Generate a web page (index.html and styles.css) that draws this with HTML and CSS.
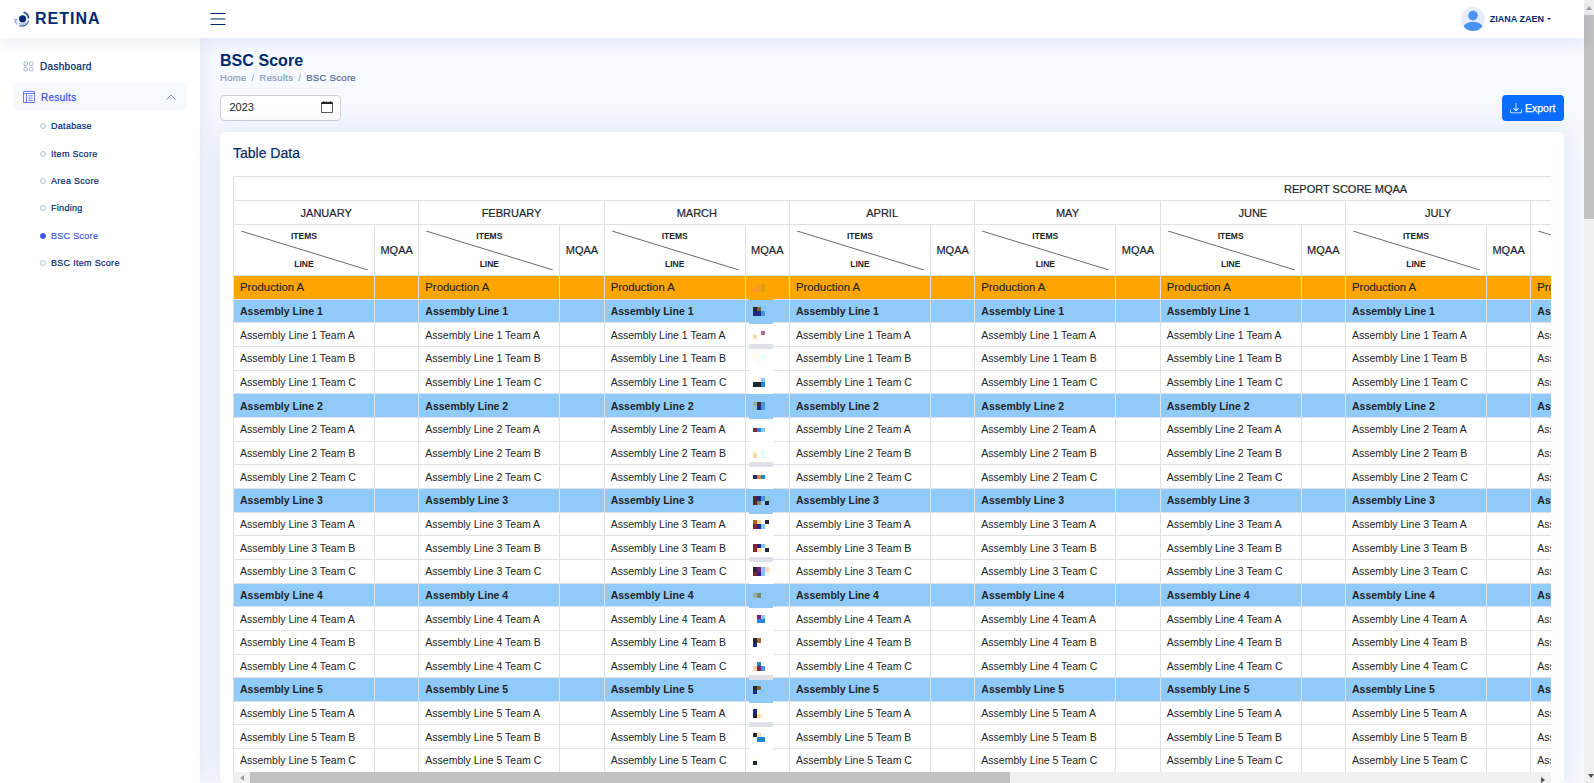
FILE: index.html
```html
<!DOCTYPE html>
<html lang="en">

<head>
    <meta charset="UTF-8">
    <title>BSC Score</title>
    <link rel="stylesheet" href="styles.css">
</head>

<body>
    <div class="page">
        <header class="topbar">
            <a class="logo" href="#">
                <svg class="logo-mark" viewBox="0 0 16 16" width="16" height="16" fill="none">
                    <circle cx="8.6" cy="7.8" r="3.6" fill="#012970"/>
                    <path d="M9.5 1.2a6.6 6.6 0 0 1 5 6.4" stroke="#123f8c" stroke-width="1.6"/>
                    <path d="M14.6 9.5a6.8 6.8 0 0 1-9.6 5" stroke="#3f68b4" stroke-width="1.2"/>
                    <path d="M12 11.6a5 5 0 0 1-7 .4" stroke="#6f8fcb" stroke-width="1"/>
                    <path d="M3 13.2A7 7 0 0 1 .9 7.6" stroke="#7f9cd4" stroke-width="1.2"/>
                    <path d="M3.4 10.6a5 5 0 0 1-.9-3" stroke="#8fa9dc" stroke-width="1"/>
                </svg>
                <span class="logo-text">RETINA</span>
            </a>
            <svg class="menu-toggle" viewBox="0 0 16 16" width="16" height="16" fill="#012970">
                <rect x="0.5" y="2" width="15" height="1"/>
                <rect x="0.5" y="7.5" width="15" height="1"/>
                <rect x="0.5" y="13" width="15" height="1"/>
            </svg>
            <div class="profile">
                <svg class="avatar" viewBox="0 0 24 24" width="24" height="24">
                    <defs>
                        <clipPath id="avatarClip"><circle cx="12" cy="12" r="12"/></clipPath>
                    </defs>
                    <circle cx="12" cy="12" r="12" fill="#e6ecf9"/>
                    <g clip-path="url(#avatarClip)" fill="#4b93f2">
                        <circle cx="12" cy="8.6" r="4.8"/>
                        <ellipse cx="12" cy="20.5" rx="9.6" ry="5.8"/>
                    </g>
                </svg>
                <span class="profile-name">ZIANA ZAEN</span>
                <span class="caret"></span>
            </div>
        </header>

        <div class="layout">
            <aside class="sidebar">
                <a class="nav-link" href="#">
                    <svg class="nav-icon" viewBox="0 0 16 16" width="11" height="11" fill="none" stroke="#899bbd">
                        <rect x="1.5" y="1.5" width="5" height="5" rx="1"/>
                        <rect x="9.5" y="1.5" width="5" height="5" rx="1"/>
                        <rect x="1.5" y="9.5" width="5" height="5" rx="1"/>
                        <rect x="9.5" y="9.5" width="5" height="5" rx="1"/>
                    </svg>
                    Dashboard
                </a>
                <a class="nav-link active" href="#">
                    <svg class="nav-icon" viewBox="0 0 16 16" width="12" height="12" fill="#4154f1">
                        <path d="M13 6.5a.5.5 0 0 0-.5-.5h-5a.5.5 0 0 0 0 1h5a.5.5 0 0 0 .5-.5zm0 3a.5.5 0 0 0-.5-.5h-5a.5.5 0 0 0 0 1h5a.5.5 0 0 0 .5-.5zm-.5 2.5a.5.5 0 0 1 0 1h-5a.5.5 0 0 1 0-1h5z"/>
                        <path d="M14 0a2 2 0 0 1 2 2v12a2 2 0 0 1-2 2H2a2 2 0 0 1-2-2V2a2 2 0 0 1 2-2h12zM2 1a1 1 0 0 0-1 1v1h14V2a1 1 0 0 0-1-1H2zM1 4v10a1 1 0 0 0 1 1h2V4H1zm4 0v11h9a1 1 0 0 0 1-1V4H5z"/>
                    </svg>
                    Results
                    <svg class="chevron" viewBox="0 0 10 6" width="10" height="6" fill="none" stroke="#4154f1" stroke-width="0.7">
                        <path d="M0.5 5.5 5 1l4.5 4.5"/>
                    </svg>
                </a>
                <ul class="subnav">
                    <li><a href="#">Database</a></li>
                    <li><a href="#">Item Score</a></li>
                    <li><a href="#">Area Score</a></li>
                    <li><a href="#">Finding</a></li>
                    <li><a class="current" href="#">BSC Score</a></li>
                    <li><a href="#">BSC Item Score</a></li>
                </ul>
            </aside>

            <main class="content">
                <h1 class="page-title">BSC Score</h1>
                <nav class="breadcrumb">
                    <span>Home</span><i>/</i><span>Results</span><i>/</i><span class="last">BSC Score</span>
                </nav>

                <div class="toolbar">
                    <label class="year-input">
                        2023
                        <svg viewBox="0 0 16 16" width="12" height="12" fill="#212529">
                            <path d="M3.5 0a.5.5 0 0 1 .5.5V1h8V.5a.5.5 0 0 1 1 0V1h1a2 2 0 0 1 2 2v11a2 2 0 0 1-2 2H2a2 2 0 0 1-2-2V3a2 2 0 0 1 2-2h1V.5a.5.5 0 0 1 .5-.5zM1 4v10a1 1 0 0 0 1 1h12a1 1 0 0 0 1-1V4H1z"/>
                        </svg>
                    </label>
                    <button class="export-btn" type="button">
                        <svg viewBox="0 0 16 16" width="12" height="12" fill="#fff">
                            <path d="M.5 9.9a.5.5 0 0 1 .5.5v2.5a1 1 0 0 0 1 1h12a1 1 0 0 0 1-1v-2.5a.5.5 0 0 1 1 0v2.5a2 2 0 0 1-2 2H2a2 2 0 0 1-2-2v-2.5a.5.5 0 0 1 .5-.5z"/>
                            <path d="M7.646 11.854a.5.5 0 0 0 .708 0l3-3a.5.5 0 0 0-.708-.708L8.5 10.293V1.5a.5.5 0 0 0-1 0v8.793L5.354 8.146a.5.5 0 1 0-.708.708l3 3z"/>
                        </svg>
                        Export
                    </button>
                </div>

                <section class="card">
                    <h2 class="card-title">Table Data</h2>
                    <div class="table-wrap">
                        <table class="score-table" id="scoreTable"></table>
                        <div class="h-scroll">
                            <span class="arrow left"></span>
                            <span class="thumb"></span>
                            <span class="arrow right"></span>
                        </div>
                    </div>
                </section>
            </main>
        </div>
    </div>

    <div class="v-scroll">
        <span class="arrow up"></span>
        <span class="thumb"></span>
        <span class="arrow down"></span>
    </div>

    <script src="table.js"></script>
</body>

</html>
```

FILE: styles.css
```css
* {
    box-sizing: border-box;
}

body {
    display: flex;
    height: 100vh;
    margin: 0;
    overflow: hidden;
    font-family: "Liberation Sans", Arial, sans-serif;
    color: #212529;
    background: #f6f9ff;
}

a {
    color: inherit;
    text-decoration: none;
}

.page {
    flex: 1;
    display: flex;
    flex-direction: column;
    min-width: 0;
}

/* scrollbars */
.v-scroll {
    flex: 0 0 10px;
    display: flex;
    flex-direction: column;
    background: #f1f1f1;
}

.v-scroll .thumb {
    height: 204px;
    background: #c1c1c1;
}

.h-scroll {
    position: absolute;
    left: 0;
    right: 0;
    bottom: 0;
    display: flex;
    height: 11px;
    background: #f1f1f1;
}

.h-scroll .thumb {
    width: 760px;
    background: #c1c1c1;
}

.arrow {
    display: flex;
    align-items: center;
    justify-content: center;
}

.arrow::before {
    content: "";
    border: 0 solid transparent;
}

.v-scroll .arrow {
    height: 15px;
}

.h-scroll .arrow {
    width: 17px;
}

.arrow.down,
.arrow.right {
    margin-left: auto;
    margin-top: auto;
}

.arrow.up::before {
    border-width: 0 3px 4px;
    border-bottom-color: #a3a3a3;
}

.arrow.down::before {
    border-width: 4px 3px 0;
    border-top-color: #505050;
}

.arrow.left::before {
    border-width: 3px 4px 3px 0;
    border-right-color: #a3a3a3;
}

.arrow.right::before {
    border-width: 3px 0 3px 4px;
    border-left-color: #505050;
}

/* top bar */
.topbar {
    position: relative;
    z-index: 10;
    flex: 0 0 38px;
    display: flex;
    align-items: center;
    padding: 0 33px 0 14px;
    background: #fff;
    box-shadow: 0 2px 20px rgba(1, 41, 112, 0.1);
}

.logo {
    display: flex;
    align-items: center;
    gap: 5px;
    width: 196px;
}

.logo-text {
    font-size: 16px;
    font-weight: bold;
    letter-spacing: 1px;
    color: #012970;
}

.menu-toggle {
    display: block;
}

.profile {
    display: flex;
    align-items: center;
    margin-left: auto;
}

.profile-name {
    margin-left: 5px;
    font-size: 9px;
    font-weight: bold;
    color: #012970;
}

.caret {
    margin-left: 3px;
    border-top: 2px solid #012970;
    border-left: 2px solid transparent;
    border-right: 2px solid transparent;
}

/* side menu */
.layout {
    flex: 1;
    display: flex;
    min-height: 0;
}

.sidebar {
    flex: 0 0 200px;
    padding: 14px 13px 0;
    background: #fff;
    box-shadow: 0 0 20px rgba(1, 41, 112, 0.1);
}

.nav-link {
    display: flex;
    align-items: center;
    height: 28px;
    margin-bottom: 3px;
    padding: 0 10px;
    border-radius: 4px;
    font-size: 10px;
    letter-spacing: 0.3px;
    -webkit-text-stroke: 0.25px;
    color: #012970;
}

.nav-link.active {
    margin-bottom: 0;
    background: #f6f9ff;
    color: #4154f1;
}

.nav-icon {
    margin-right: 6px;
}

.nav-icon path,
.chevron path {
    -webkit-text-stroke: 0;
}

.chevron {
    margin-left: auto;
    margin-right: 1px;
}

.subnav {
    margin: 0;
    padding: 2.4px 0 0;
    list-style: none;
}

.subnav li {
    height: 27.3px;
    padding-left: 27px;
    line-height: 27px;
}

.subnav a {
    display: block;
    font-size: 9px;
    letter-spacing: 0.3px;
    -webkit-text-stroke: 0.2px;
    color: #012970;
}

.subnav a::before {
    content: "";
    display: inline-block;
    width: 4px;
    height: 4px;
    margin-right: 5px;
    border: 1px solid #b6c2d8;
    border-radius: 50%;
    vertical-align: 0;
}

.subnav a.current {
    color: #4154f1;
}

.subnav a.current::before {
    background: #4154f1;
    border-color: #4154f1;
}

/* page */
.content {
    flex: 1;
    display: flex;
    flex-direction: column;
    min-width: 0;
    padding: 13px 20px 0;
}

.page-title {
    margin: 0;
    font-size: 16px;
    line-height: 19px;
    letter-spacing: 0.05px;
    color: #012970;
}

.breadcrumb {
    display: flex;
    margin-top: 1px;
    font-size: 9.5px;
    line-height: 13px;
    letter-spacing: 0.3px;
    -webkit-text-stroke: 0.2px;
    color: #899bbd;
}

.breadcrumb i {
    margin: 0 5px;
    font-style: normal;
    -webkit-text-stroke: 0;
}

.breadcrumb .last {
    color: #51678f;
}

.toolbar {
    display: flex;
    justify-content: space-between;
    margin-top: 11px;
}

.year-input {
    display: flex;
    align-items: center;
    justify-content: space-between;
    width: 121px;
    height: 26px;
    padding: 0 7px 2px 8.5px;
    background: #fff;
    border: 1px solid #ced4da;
    border-radius: 4px;
    font-size: 11px;
}

.export-btn {
    display: flex;
    align-items: center;
    gap: 3px;
    width: 62px;
    height: 26px;
    padding: 0 0 0 8px;
    background: #0d6efd;
    border: none;
    border-radius: 4px;
    font-family: inherit;
    font-size: 10.5px;
    -webkit-text-stroke: 0.25px;
    color: #fff;
}

.card {
    flex: 1;
    margin-top: 11px;
    padding: 0 13px;
    background: #fff;
    border-radius: 5px;
    box-shadow: 0 0 30px rgba(1, 41, 112, 0.1);
}

.card-title {
    margin: 0;
    height: 44px;
    padding-top: 13px;
    font-size: 14px;
    line-height: 16px;
    font-weight: normal;
    -webkit-text-stroke: 0.2px;
    color: #012970;
}

/* table */
.table-wrap {
    position: relative;
    height: calc(100vh - 176px);
    overflow: hidden;
}

.score-table {
    table-layout: fixed;
    width: 2224px;
    border-collapse: collapse;
    font-size: 10.5px;
}

.score-table th,
.score-table td {
    height: 23.67px;
    padding: 0 6px;
    border: 1px solid #dee2e6;
    overflow: hidden;
    white-space: nowrap;
}

.score-table th {
    height: 24px;
    font-size: 11px;
    font-weight: normal;
    text-align: center;
    -webkit-text-stroke: 0.2px;
}

.score-table th.mqaa {
    padding: 0;
}

.score-table th.diagonal {
    position: relative;
    height: 50px;
    padding: 0;
    font-size: 8.5px;
    font-weight: bold;
    -webkit-text-stroke: 0;
}

.diagonal svg {
    position: absolute;
    top: 6px;
    left: 7px;
    width: 127px;
    height: 39px;
}

.diagonal span {
    display: block;
    height: 25px;
    line-height: 22px;
}

.diagonal span + span {
    line-height: 28px;
}

.row-prod td {
    background: #ffa500;
    font-size: 11.3px;
    -webkit-text-stroke: 0.15px;
}

.row-line td {
    background: #90caf9;
    font-weight: bold;
}

.pix-cell {
    position: relative;
    overflow: visible !important;
}

/* blurred score, covers the cell a bit past its border */
.pix {
    position: absolute;
    top: 1px;
    bottom: -3px;
    left: 3px;
    width: 24px;
    display: grid;
    grid-template-columns: repeat(4, 4px);
    grid-auto-rows: 4.33px;
    align-content: center;
    padding: 0 0 3px 4px;
    background: #fff;
}

.row-prod .pix {
    background: #ffa500;
}

.row-line .pix {
    background: #90caf9;
}

.pix.bar {
    z-index: 1;
}

.pix.bar::after {
    content: "";
    position: absolute;
    left: 0;
    right: 0;
    bottom: 0;
    height: 5px;
    background: #dee2e6;
}
```

FILE: table.js
```js
const months = ["JANUARY", "FEBRUARY", "MARCH", "APRIL", "MAY", "JUNE", "JULY", "AUGUST", "SEPTEMBER", "OCTOBER", "NOVEMBER", "DECEMBER"];

const colors = {
    n: "#202830", v: "#1f2a80", r: "#8a2030", u: "#802070", s: "#2088d8", l: "#80c8ff",
    c: "#fffde8", e: "#e0ffff", o: "#ffd9a0", w: "#a86830", g: "#90b0a8", t: "#90c8c8",
    k: "#502a30", i: "#4a90e0", a: "#f79a2a", d: "#d9a300", f: "#ff8f3a", h: "#7a6a30",
    q: "#b06a9a", x: "#808868", z: "#d09030"
};

// rows of the table, with the blurred MQAA value of March
const rows = [
    { label: "Production A", kind: "prod", pix: [".ad.", "fad."] },
    { label: "Assembly Line 1", kind: "line", pix: ["nhl.", "vvi."] },
    { label: "Assembly Line 1 Team A", pix: ["..q.", "o..."], bar: true },
    { label: "Assembly Line 1 Team B", pix: ["c.e.", ".c.."] },
    { label: "Assembly Line 1 Team C", pix: ["c.l.", "nns."] },
    { label: "Assembly Line 2", kind: "line", pix: ["gki.", "tvi."] },
    { label: "Assembly Line 2 Team A", pix: ["rslc"] },
    { label: "Assembly Line 2 Team B", pix: ["c.e.", "o.e."], bar: true },
    { label: "Assembly Line 2 Team C", pix: ["vzs."] },
    { label: "Assembly Line 3", kind: "line", pix: ["kvit", "kx.n"] },
    { label: "Assembly Line 3 Team A", pix: ["wo.n", "rvlc"] },
    { label: "Assembly Line 3 Team B", pix: ["rvlc", "ro.n"], bar: true },
    { label: "Assembly Line 3 Team C", pix: ["nulo", "rvlc"] },
    { label: "Assembly Line 4", kind: "line", pix: ["gx.."] },
    { label: "Assembly Line 4 Team A", pix: ["cul.", ".ss."] },
    { label: "Assembly Line 4 Team B", pix: ["nw..", "v..."] },
    { label: "Assembly Line 4 Team C", pix: [".s..", "oui."], bar: true },
    { label: "Assembly Line 5", kind: "line", pix: ["nh..", "v.l."] },
    { label: "Assembly Line 5 Team A", pix: ["vc..", "no.."], bar: true },
    { label: "Assembly Line 5 Team B", pix: ["noe.", ".ss."] },
    { label: "Assembly Line 5 Team C", pix: ["c...", "n..."] }
];

function pixHtml(row) {
    let html = `<div class="pix${row.bar ? " bar" : ""}">`;
    row.pix.join("").split("").forEach(function (key) {
        html += key === "." ? "<span></span>" : `<span style="background:${colors[key]}"></span>`;
    });
    return html + "</div>";
}

const diagonal = '<svg viewBox="0 0 127 39" fill="none"><line x1="0" y1="0" x2="127" y2="39" stroke="#444" stroke-width="0.8"/></svg>';

let html = "<colgroup>";
months.forEach(function () {
    html += '<col style="width:141px"><col style="width:44.33px">';
});
html += "</colgroup><thead>";

html += '<tr><th colspan="24">REPORT SCORE MQAA</th></tr><tr>';
months.forEach(function (month) {
    html += `<th colspan="2">${month}</th>`;
});
html += "</tr><tr>";
months.forEach(function () {
    html += `<th class="diagonal">${diagonal}<span>ITEMS</span><span>LINE</span></th><th class="mqaa">MQAA</th>`;
});
html += "</tr></thead><tbody>";

rows.forEach(function (row) {
    html += `<tr class="${row.kind ? "row-" + row.kind : ""}">`;
    months.forEach(function (month) {
        html += `<td>${row.label}</td>`;
        html += month === "MARCH" ? `<td class="pix-cell">${pixHtml(row)}</td>` : "<td></td>";
    });
    html += "</tr>";
});

document.getElementById("scoreTable").innerHTML = html + "</tbody>";
```
